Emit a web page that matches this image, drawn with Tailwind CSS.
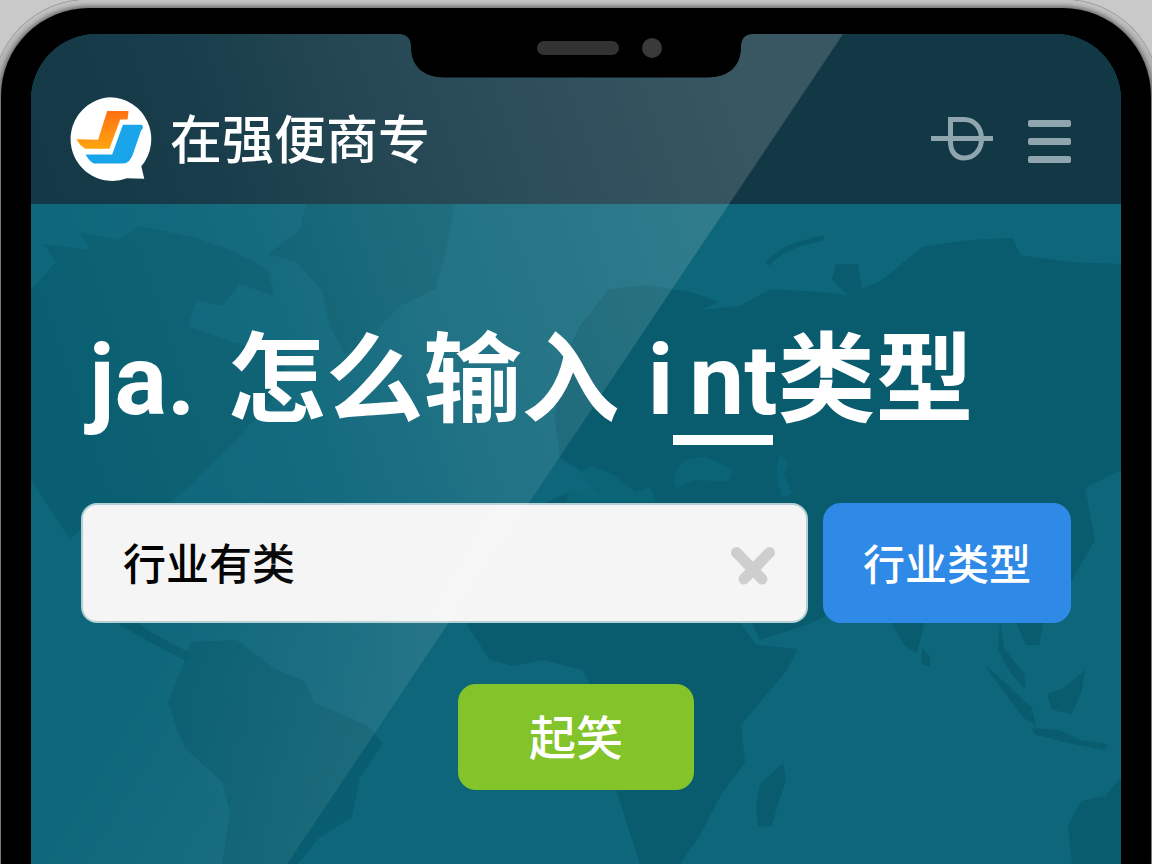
<!DOCTYPE html>
<html lang="zh-CN">
<head>
    <meta charset="UTF-8">
    <meta name="viewport" content="width=device-width, initial-scale=1.0">
    <title>怎么输入 int类型</title>
    <script src="https://cdn.jsdelivr.net/npm/@tailwindcss/browser@4"></script>
</head>
<body class="min-h-screen overflow-hidden bg-[#c9c9c9] font-['Noto_Sans_CJK_SC',sans-serif]">
    <!-- Phone frame -->
    <div class="-mx-[7px] flex min-h-screen flex-col rounded-t-[95px] bg-linear-to-b from-[#c4c4c4] to-[#b0b0b0] to-[90px] px-2 pt-2 shadow-[0_0_0_1px_#999]">
        <div class="flex grow flex-col rounded-t-[88px] bg-black px-[30px] pt-[26px] shadow-[0_0_5px_2px_#666]">
            <!-- Screen -->
            <div class="relative isolate flex grow flex-col overflow-hidden rounded-t-[66px] bg-[#0d667a]">
                <!-- World map -->
                <svg class="absolute inset-0 -z-10 h-full w-full" viewBox="31 34 1090 830" preserveAspectRatio="xMidYMin slice" aria-hidden="true">
                    <g fill="#085c6e">
                        <path opacity=".7" d="M31 290L56 262L44 244L90 250L80 232L118 240L140 226L196 238L232 250L268 270L274 296L240 284L222 306L196 300L188 326L232 342L290 356L272 400L236 440L190 486L150 520L120 540L90 520L70 540L31 480Z" />
                        <path opacity=".7" d="M268 254L300 230L306 204H455L446 250L436 289L400 306L383 324L362 346L344 354L330 326L321 289L296 262Z" />
                        <path d="M120 610L150 632L192 654L188 662L150 642L118 624Z" />
                        <path opacity=".8" d="M191 642L237 640L275 669L306 682L314 703L367 725L383 743L360 778L352 817L318 839L298 864H222L230 813L222 782L184 747L168 703L180 672Z" />
                        <path d="M555 420L560 370L579 327L609 289L647 285L690 292L719 302L700 310L740 306L771 289L832 293L848 296L832 280L836 264L858 264L862 289L882 280L922 247L970 240L1013 238L1020 255L1070 262L1121 264V470L1085 488L1095 540L1060 600L1043 624L1039 645L1026 645L1017 624L1000 600L940 600L924 624L917 653L905 646L892 624L860 600L809 624L760 640L741 600H520L540 505L575 490L600 500L580 470L560 458Z" />
                        <path d="M467 625L480 570L520 520L620 500L720 560L741 624L756 645L798 649L787 670L741 725L745 763L722 793L700 835L680 864H640L617 793L612 730L583 670L543 660L513 666L490 660Z" />
                        <path d="M783 763L786 780L771 827L758 826L756 806L760 784Z" />
                        <path d="M922 648L930 656L930 666L921 664Z" />
                        <path d="M984 664L1002 680L1032 708L1036 726L1024 718L1004 692ZM1032 728L1060 730L1080 740L1108 744L1104 750L1064 742L1034 734ZM1000 622L1004 648L1024 674L1026 690L1010 672L998 650ZM1085 670L1082 690L1072 714L1052 710L1047 694L1064 688Z" />
                        <path d="M1119 780L1105 796L1081 801L1068 826L1072 864H1121V780Z" />
                    </g>
                    <g fill="#0d667a" opacity=".7">
                        <path d="M674 474L684 460L704 456L734 470L728 482L696 480L676 488Z" />
                        <path d="M779 454L788 462L784 474L792 494L782 498L776 476Z" />
                        <path d="M570 478L590 466L612 474L636 492L650 486L656 502H566Z" />
                    </g>
                    <path fill="none" stroke="#085c6e" stroke-width="5" d="M768 264Q780 246 824 238" />
                </svg>

                <!-- Header -->
                <header class="flex h-[170px] items-center justify-between bg-[#123745] pt-[40px] pr-[50px] pl-[36px]">
                    <a href="#" class="flex items-center gap-4 text-white">
                        <svg class="size-[87px]" viewBox="205 290 260 260" aria-hidden="true">
                            <path fill="#fff" d="M333 294a125 125 0 0 1 94 206L436 537L384 536A125 125 0 1 1 333 294Z" />
                            <defs>
                                <linearGradient id="logo-orange" x1="0" y1="0" x2="0" y2="1">
                                    <stop offset="0" stop-color="#ff6d0f" />
                                    <stop offset="1" stop-color="#ffa30a" />
                                </linearGradient>
                            </defs>
                            <path fill="url(#logo-orange)" d="M325 335H389L386 360H364L332 448H259Q242 436 233 419L298 421Z" />
                            <path fill="#15a3ea" d="M372 376H428Q437 382 426 394L404 458Q394 492 372 492H285Q268 482 261 465H340Z" />
                        </svg>
                        <span class="pb-1 text-[52px] leading-[60px] font-medium">在强便商专</span>
                    </a>
                    <nav class="flex items-center gap-[34px] text-[#8fa6af]">
                        <button type="button" aria-label="切换">
                            <svg class="h-[44px] w-[63px]" viewBox="930 117 63 44" fill="none" stroke="currentColor" aria-hidden="true">
                                <path stroke-width="5" d="M949.500 119.500V142C949.500 152 955 158 963 158C973 158 980.500 150 980.500 139C980.500 127 973 119.500 963 119.500Z" />
                                <path stroke-width="5" d="M930 138.500H992" />
                            </svg>
                        </button>
                        <button type="button" aria-label="菜单" class="flex flex-col gap-[11px] pt-1">
                            <span class="h-[7px] w-[43px] rounded-xs bg-current"></span>
                            <span class="h-[7px] w-[43px] rounded-xs bg-current"></span>
                            <span class="h-[7px] w-[43px] rounded-xs bg-current"></span>
                        </button>
                    </nav>
                </header>

                <!-- Search -->
                <main class="flex flex-col px-[50px] pt-[128px]">
                    <h1 class="flex items-baseline pl-2 font-[Roboto,'Noto_Sans_CJK_SC',sans-serif] text-[98px] leading-[98px] font-bold whitespace-nowrap text-white">
                        <span>ja.</span>
                        <span class="ml-8">怎么输入</span>
                        <span class="ml-7">i</span>
                        <span class="relative pl-4">nt<span class="absolute top-[103px] left-0 h-[10px] w-[100px] bg-white"></span></span>
                        <span>类型</span>
                    </h1>
                    <form class="mt-[73px] flex flex-col" onsubmit="return false">
                        <div class="flex gap-[15px]">
                            <div class="relative grow">
                                <input id="keyword" type="text" aria-label="行业" value="行业有类" class="h-[120px] w-full rounded-[16px] border-2 border-[#b4d0d5] bg-[#f5f5f5] pr-24 pb-1 pl-10 text-[43px] font-medium text-black outline-none">
                                <button type="button" id="clearBtn" aria-label="清除" class="absolute top-[43px] right-[32px]">
                                    <svg class="h-[40px] w-[46px]" viewBox="730 546 46 40" fill="none" stroke="#cecece" stroke-width="11" stroke-linecap="round" aria-hidden="true">
                                        <path d="M736.500 552.500L762 579M769.500 552.500L744 579" />
                                    </svg>
                                </button>
                            </div>
                            <button type="button" class="h-[120px] w-[248px] shrink-0 rounded-[18px] bg-[#2f89e6] pb-1 text-[42px] font-medium text-white">行业类型</button>
                        </div>
                        <button type="submit" class="mt-[61px] h-[106px] w-[236px] self-center rounded-[18px] bg-[#82c42a] pb-1 text-[47px] font-medium text-white">起笑</button>
                    </form>
                </main>

                <!-- Glass reflection -->
                <svg class="pointer-events-none absolute inset-0 h-full w-full" viewBox="31 34 1090 830" preserveAspectRatio="xMidYMin slice" aria-hidden="true">
                    <defs>
                        <linearGradient id="glare" gradientUnits="userSpaceOnUse" x1="50" y1="380" x2="770" y2="140">
                            <stop offset="0" stop-color="#fff" stop-opacity="0" />
                            <stop offset=".3" stop-color="#fff" stop-opacity=".03" />
                            <stop offset=".5" stop-color="#fff" stop-opacity=".08" />
                            <stop offset="1" stop-color="#fff" stop-opacity=".16" />
                        </linearGradient>
                        <linearGradient id="glare-low" gradientUnits="userSpaceOnUse" x1="180" y1="560" x2="480" y2="740">
                            <stop offset="0" stop-color="#fff" stop-opacity="0" />
                            <stop offset="1" stop-color="#fff" stop-opacity=".08" />
                        </linearGradient>
                    </defs>
                    <path fill="url(#glare)" d="M31 34H843L287 864H31Z" />
                    <path fill="url(#glare-low)" d="M31 504H528L287 864H31Z" />
                </svg>

                <!-- Notch -->
                <svg class="absolute top-0 left-1/2 h-[44px] w-[354px] -translate-x-1/2" viewBox="400 34 354 44" aria-hidden="true">
                    <path d="M400 34C408 34 412 39 412 47C412 66 424 77.500 446 77.500H708C730 77.500 742 66 742 47C742 39 746 34 754 34Z" />
                    <rect x="538" y="41" width="82" height="14" rx="7" fill="#333" />
                    <circle cx="653" cy="48" r="10" fill="#3a3a3a" />
                </svg>
            </div>
        </div>
    </div>

    <script>
        document.getElementById('clearBtn').addEventListener('click', function() {
            const keyword = document.getElementById('keyword');
            keyword.value = '';
            keyword.focus();
        });
    </script>
</body>
</html>
